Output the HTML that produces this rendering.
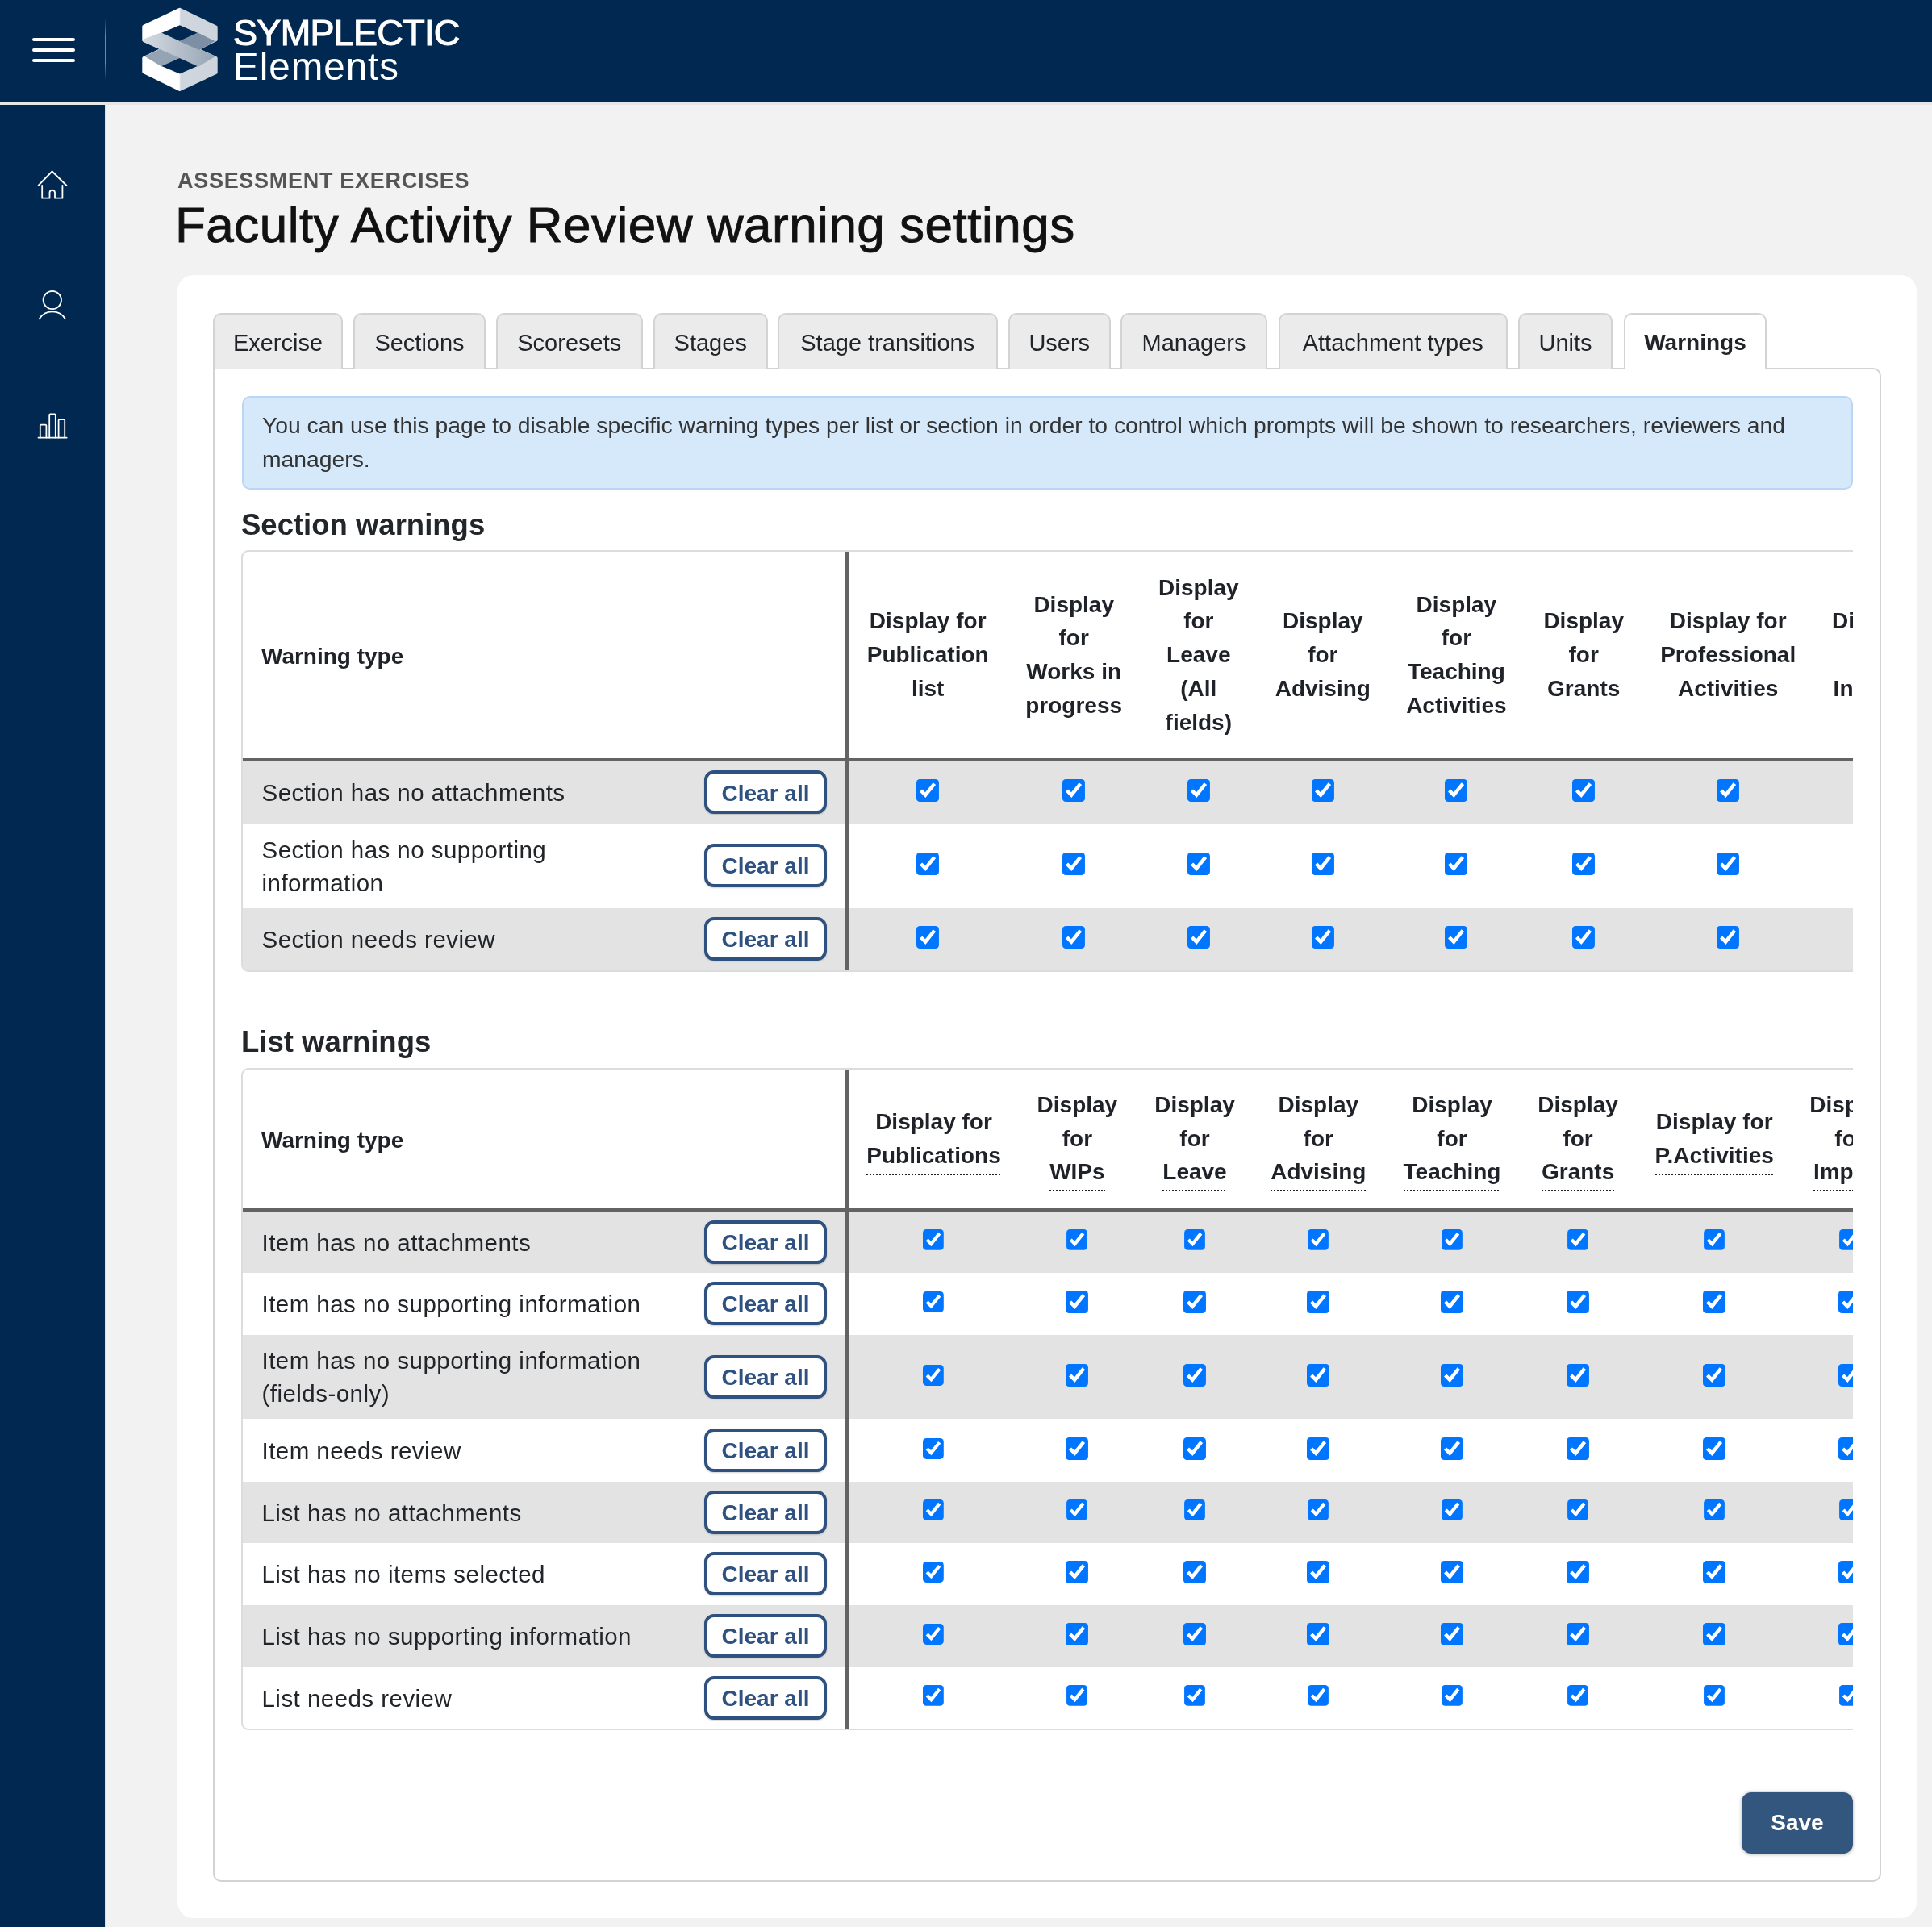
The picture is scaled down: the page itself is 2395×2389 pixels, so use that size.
<!DOCTYPE html><html><head><meta charset="utf-8"><title>Faculty Activity Review warning settings</title><style>
*{margin:0;padding:0;box-sizing:border-box}
html,body{width:2395px;height:2389px;overflow:hidden;background:#f2f2f2;font-family:"Liberation Sans",sans-serif;}
.abs{position:absolute}
#root{position:absolute;left:0;top:0;width:2395px;height:2389px;overflow:hidden;will-change:transform}
#hdr{position:absolute;left:0;top:0;width:2395px;height:127px;background:#012850}
#hline{position:absolute;left:0;top:127px;width:2395px;height:2.5px;background:#e6e6e6}
#side{position:absolute;left:0;top:129.5px;width:130px;height:2260px;background:#012850}
#sline{position:absolute;left:130px;top:129.5px;width:2px;height:2260px;background:#e2e2e2}
.t{position:absolute;white-space:nowrap}
.card{position:absolute;left:220px;top:340.5px;width:2156px;height:2037.5px;background:#fff;border-radius:20px}
.tab{position:absolute;top:388px;height:69px;background:#ebebeb;border:2px solid #d3d3d3;border-bottom:none;border-radius:10px 10px 0 0;font-size:29px;color:#212529;text-align:center;line-height:40px}
.tab span{position:absolute;left:0;right:0;top:14.5px}
.tab.act{background:#fff;font-weight:bold;font-size:28px;z-index:3;height:70px}
.pane{position:absolute;left:264px;top:455.5px;width:2068px;height:1877.5px;border:2px solid #d3d3d3;border-radius:0 10px 10px 10px;background:#fff}
.alert{position:absolute;left:299.5px;top:491px;width:1997px;height:115.5px;background:#d5e9fb;border:2px solid #b9d7f5;border-radius:10px}
.h2{position:absolute;font-weight:bold;font-size:36.5px;color:#22262b;line-height:44px;white-space:nowrap}
.tw{position:absolute;left:299px;width:1998px;overflow:hidden;border-left:2px solid #dcdcdc;border-top:2px solid #dcdcdc;border-bottom:2px solid #dcdcdc;border-radius:9px 0 0 9px}
.row{position:absolute;left:0;width:2200px}
.g{background:#e3e3e3}
.hl{position:absolute;left:0;width:2200px;height:4px;background:#636363}
.vl{position:absolute;left:747px;width:4px;background:#636363}
.lbl{position:absolute;left:23.5px;font-size:29.5px;letter-spacing:0.46px;line-height:41px;color:#212529;white-space:nowrap}
.btn{position:absolute;left:572px;width:152px;height:54px;border:4px solid #2f5180;border-radius:12px;background:#fff;color:#2f5180;font-weight:bold;font-size:28px;text-align:center;line-height:40px;box-shadow:0 1px 2px rgba(0,0,0,.18)}
.btn span{position:absolute;left:0;right:0;top:4.3px}
.hd{position:absolute;font-weight:bold;font-size:28px;line-height:41.7px;color:#1f2329;text-align:center;white-space:nowrap}
.ab{background:linear-gradient(to right,#1f2329 50%,transparent 50%) 0 100%/4px 2px repeat-x;padding-bottom:9px}
.cb{position:absolute;width:27px;height:27px}
.cb input{zoom:2.15;margin:0;display:block}
.save{position:absolute;left:2159px;top:2222px;width:138px;height:76px;background:#33567f;border-radius:12px;color:#fff;font-weight:bold;font-size:28px;text-align:center;box-shadow:0 0.5px 4px rgba(0,0,0,.3)}
.save span{position:absolute;left:0;right:0;top:17.89799999999991px;line-height:40px}
</style></head><body>
<div id="root">
<div id="hdr">
<div class="abs" style="left:40px;top:46.5px;width:53px;height:4.3px;border-radius:2px;background:#fff"></div>
<div class="abs" style="left:40px;top:60px;width:53px;height:4.3px;border-radius:2px;background:#fff"></div>
<div class="abs" style="left:40px;top:72.7px;width:53px;height:4.3px;border-radius:2px;background:#fff"></div>
<div class="abs" style="left:130px;top:22px;width:1.5px;height:78px;background:linear-gradient(to bottom,rgba(255,255,255,0),rgba(255,255,255,.45) 30%,rgba(255,255,255,.45) 70%,rgba(255,255,255,0))"></div>
<svg class="abs" style="left:0;top:0" width="300" height="127" viewBox="0 0 300 127">
<defs>
<linearGradient id="lr" x1="176" x2="270" y1="0" y2="0" gradientUnits="userSpaceOnUse">
<stop offset="0" stop-color="#ffffff"/><stop offset="0.49" stop-color="#ffffff"/><stop offset="0.51" stop-color="#cfd6de"/><stop offset="1" stop-color="#cdd4dc"/></linearGradient>
<linearGradient id="bd" x1="180" x2="266" y1="0" y2="0" gradientUnits="userSpaceOnUse">
<stop offset="0" stop-color="#d3d9e0"/><stop offset="1" stop-color="#96a5b5"/></linearGradient>
</defs>
<polygon fill="url(#lr)" stroke="url(#lr)" stroke-width="4" stroke-linejoin="round" points="178.3,32.9 222.8,11.8 267.7,33.5 267.7,49.2 249,58.6 222.8,69.5 198,58.6 178.3,49.8"/>
<polygon fill="url(#lr)" stroke="url(#lr)" stroke-width="4" stroke-linejoin="round" points="178.3,72 196,63.6 222.8,52 249,63.4 267.7,72 267.7,90 222.8,111 178.3,89.3"/>
<polygon fill="url(#bd)" stroke="url(#bd)" stroke-width="1.4" stroke-linejoin="round" points="176.8,49.6 200.4,40.8 265.5,69.8 245.8,82 180.1,52.2"/>
<polygon fill="#7d8fa5" stroke="#7d8fa5" stroke-width="1" points="222.5,50.7 244.6,40.8 265.5,51 247,61.4"/>
<polygon fill="#95a4b4" stroke="#95a4b4" stroke-width="1" points="180.1,69.8 198,61.4 222,71.8 200.4,82"/>
<polygon fill="#012850" points="200.4,40.8 222.8,31.3 244.6,40.8 222.5,50.7"/>
<polygon fill="#012850" points="200.4,82 222.5,72.1 244.6,82 222.8,91.5"/>
</svg>
<div class="t" style="left:289px;top:15.807499999999997px;font-size:45px;line-height:50px;color:#fff;letter-spacing:-0.7px;-webkit-text-stroke:1.1px #fff">SYMPLECTIC</div>
<div class="t" style="left:289px;top:58.44125000000001px;font-size:47.5px;line-height:50px;color:#fff;letter-spacing:1px">Elements</div>
</div><div id="hline"></div>
<div id="side"></div><div id="sline"></div>
<svg class="abs" style="left:0;top:0" width="130" height="600" viewBox="0 0 130 600" fill="none" stroke="#fff" stroke-width="1.8" stroke-linecap="round" stroke-linejoin="round">
<polyline points="47.5,230 64.6,212.5 82.5,230"/>
<path d="M52.2,230 V245.7 H61.5 V238.5 A3.3,3.3 0 0 1 68,238.5 V245.7 H77.4 V230"/>
<circle cx="64.8" cy="372" r="11.2"/>
<path d="M48.8,395.2 A19,19 0 0 1 80.8,395.2"/>
<path d="M47.5,542.6 H82.7"/>
<path d="M49.8,542.6 V527.5 A1,1 0 0 1 50.8,526.6 H56.4 A1,1 0 0 1 57.4,527.5 V542.6"/>
<path d="M61.2,542.6 V514.4 A1,1 0 0 1 62.2,513.5 H67.8 A1,1 0 0 1 68.8,514.4 V542.6"/>
<path d="M72.6,542.6 V521 A1,1 0 0 1 73.6,520.1 H79.2 A1,1 0 0 1 80.2,521 V542.6"/>
</svg>
<div class="t" style="left:220px;top:208.5445px;font-size:27px;line-height:30px;font-weight:bold;color:#555;letter-spacing:0.71px">ASSESSMENT EXERCISES</div>
<div class="t" style="left:217px;top:243.817px;font-size:62px;line-height:70px;color:#111;letter-spacing:0.5px;-webkit-text-stroke:0.9px #111">Faculty Activity Review warning settings</div>
<div class="card"></div>
<div class="pane"></div>
<div class="tab" style="left:264px;width:161px"><span>Exercise</span></div>
<div class="tab" style="left:438px;width:164px"><span>Sections</span></div>
<div class="tab" style="left:614.5px;width:182.5px"><span>Scoresets</span></div>
<div class="tab" style="left:810px;width:141.5px"><span>Stages</span></div>
<div class="tab" style="left:963.5px;width:273.5px"><span>Stage transitions</span></div>
<div class="tab" style="left:1250px;width:126.5px"><span>Users</span></div>
<div class="tab" style="left:1389px;width:182px"><span>Managers</span></div>
<div class="tab" style="left:1584.5px;width:284.5px"><span>Attachment types</span></div>
<div class="tab" style="left:1882px;width:117px"><span>Units</span></div>
<div class="tab act" style="left:2013px;width:177px"><span>Warnings</span></div>
<div class="alert"></div>
<div class="t" style="left:325px;top:507.19404999999995px;font-size:28.3px;line-height:41.6px;color:#333">You can use this page to disable specific warning types per list or section in order to control which prompts will be shown to researchers, reviewers and<br>managers.</div>
<div class="h2" style="left:299px;top:629.15275px">Section warnings</div>
<div class="tw" style="top:682px;height:522.5px">
<div class="hd" style="left:23px;top:108.64800000000002px;text-align:left">Warning type</div>
<div class="hd" style="left:699.2px;width:300px;top:65.45000000000005px">Display for<br>Publication<br>list</div>
<div class="hd" style="left:880.2px;width:300px;top:44.60000000000002px">Display<br>for<br>Works in<br>progress</div>
<div class="hd" style="left:1034.8px;width:300px;top:23.75px">Display<br>for<br>Leave<br>(All<br>fields)</div>
<div class="hd" style="left:1188.8px;width:300px;top:65.45000000000005px">Display<br>for<br>Advising</div>
<div class="hd" style="left:1354.4px;width:300px;top:44.60000000000002px">Display<br>for<br>Teaching<br>Activities</div>
<div class="hd" style="left:1512.2px;width:300px;top:65.45000000000005px">Display<br>for<br>Grants</div>
<div class="hd" style="left:1691.1999999999998px;width:300px;top:65.45000000000005px">Display for<br>Professional<br>Activities</div>
<div class="hd" style="left:1892.4px;width:300px;top:65.45000000000005px">Display for<br><br>Innovation</div>
<div class="hl" style="top:256px"></div>
<div class="row g" style="top:260px;height:76.5px"></div>
<div class="lbl" style="top:278.25px">Section has no attachments</div>
<div class="btn" style="top:271.25px"><span>Clear all</span></div>
<div class="cb" style="left:835.2px;top:282.25px"><input type="checkbox" checked></div>
<div class="cb" style="left:1016.2px;top:282.25px"><input type="checkbox" checked></div>
<div class="cb" style="left:1170.8px;top:282.25px"><input type="checkbox" checked></div>
<div class="cb" style="left:1324.8px;top:282.25px"><input type="checkbox" checked></div>
<div class="cb" style="left:1490.4px;top:282.25px"><input type="checkbox" checked></div>
<div class="cb" style="left:1648.2px;top:282.25px"><input type="checkbox" checked></div>
<div class="cb" style="left:1827.1999999999998px;top:282.25px"><input type="checkbox" checked></div>
<div class="cb" style="left:2028.4px;top:282.25px"><input type="checkbox" checked></div>
<div class="row" style="top:336.5px;height:105px"></div>
<div class="lbl" style="top:348.5px">Section has no supporting<br>information</div>
<div class="btn" style="top:362.0px"><span>Clear all</span></div>
<div class="cb" style="left:835.2px;top:373.0px"><input type="checkbox" checked></div>
<div class="cb" style="left:1016.2px;top:373.0px"><input type="checkbox" checked></div>
<div class="cb" style="left:1170.8px;top:373.0px"><input type="checkbox" checked></div>
<div class="cb" style="left:1324.8px;top:373.0px"><input type="checkbox" checked></div>
<div class="cb" style="left:1490.4px;top:373.0px"><input type="checkbox" checked></div>
<div class="cb" style="left:1648.2px;top:373.0px"><input type="checkbox" checked></div>
<div class="cb" style="left:1827.1999999999998px;top:373.0px"><input type="checkbox" checked></div>
<div class="cb" style="left:2028.4px;top:373.0px"><input type="checkbox" checked></div>
<div class="row g" style="top:441.5px;height:77px"></div>
<div class="lbl" style="top:460.0px">Section needs review</div>
<div class="btn" style="top:453.0px"><span>Clear all</span></div>
<div class="cb" style="left:835.2px;top:464.0px"><input type="checkbox" checked></div>
<div class="cb" style="left:1016.2px;top:464.0px"><input type="checkbox" checked></div>
<div class="cb" style="left:1170.8px;top:464.0px"><input type="checkbox" checked></div>
<div class="cb" style="left:1324.8px;top:464.0px"><input type="checkbox" checked></div>
<div class="cb" style="left:1490.4px;top:464.0px"><input type="checkbox" checked></div>
<div class="cb" style="left:1648.2px;top:464.0px"><input type="checkbox" checked></div>
<div class="cb" style="left:1827.1999999999998px;top:464.0px"><input type="checkbox" checked></div>
<div class="cb" style="left:2028.4px;top:464.0px"><input type="checkbox" checked></div>
<div class="vl" style="top:0;height:518.5px"></div>
</div>
<div class="h2" style="left:299px;top:1270.05275px">List warnings</div>
<div class="tw" style="top:1323.5px;height:821.0px">
<div class="hd" style="left:23px;top:67.548px;text-align:left">Warning type</div>
<div class="hd" style="left:706.5px;width:300px;top:44.299999999999955px">Display for<br><span class="ab">Publications</span></div>
<div class="hd" style="left:884.4000000000001px;width:300px;top:23.450000000000045px">Display<br>for<br><span class="ab">WIPs</span></div>
<div class="hd" style="left:1030px;width:300px;top:23.450000000000045px">Display<br>for<br><span class="ab">Leave</span></div>
<div class="hd" style="left:1183.3px;width:300px;top:23.450000000000045px">Display<br>for<br><span class="ab">Advising</span></div>
<div class="hd" style="left:1349px;width:300px;top:23.450000000000045px">Display<br>for<br><span class="ab">Teaching</span></div>
<div class="hd" style="left:1505.1px;width:300px;top:23.450000000000045px">Display<br>for<br><span class="ab">Grants</span></div>
<div class="hd" style="left:1674.1999999999998px;width:300px;top:44.299999999999955px">Display for<br><span class="ab">P.Activities</span></div>
<div class="hd" style="left:1842px;width:300px;top:23.450000000000045px">Display<br>for<br><span class="ab">Impact</span></div>
<div class="hl" style="top:172px"></div>
<div class="row g" style="top:176px;height:76px"></div>
<div class="lbl" style="top:194.0px">Item has no attachments</div>
<div class="btn" style="top:187.0px"><span>Clear all</span></div>
<div class="cb" style="left:842.5px;top:198.0px"><input type="checkbox" checked></div>
<div class="cb" style="left:1020.4000000000001px;top:198.0px"><input type="checkbox" checked></div>
<div class="cb" style="left:1166px;top:198.0px"><input type="checkbox" checked></div>
<div class="cb" style="left:1319.3px;top:198.0px"><input type="checkbox" checked></div>
<div class="cb" style="left:1485px;top:198.0px"><input type="checkbox" checked></div>
<div class="cb" style="left:1641.1px;top:198.0px"><input type="checkbox" checked></div>
<div class="cb" style="left:1810.1999999999998px;top:198.0px"><input type="checkbox" checked></div>
<div class="cb" style="left:1978px;top:198.0px"><input type="checkbox" checked></div>
<div class="row" style="top:252px;height:77px"></div>
<div class="lbl" style="top:270.5px">Item has no supporting information</div>
<div class="btn" style="top:263.5px"><span>Clear all</span></div>
<div class="cb" style="left:842.5px;top:274.5px"><input type="checkbox" checked></div>
<div class="cb" style="left:1020.4000000000001px;top:274.5px"><input type="checkbox" checked></div>
<div class="cb" style="left:1166px;top:274.5px"><input type="checkbox" checked></div>
<div class="cb" style="left:1319.3px;top:274.5px"><input type="checkbox" checked></div>
<div class="cb" style="left:1485px;top:274.5px"><input type="checkbox" checked></div>
<div class="cb" style="left:1641.1px;top:274.5px"><input type="checkbox" checked></div>
<div class="cb" style="left:1810.1999999999998px;top:274.5px"><input type="checkbox" checked></div>
<div class="cb" style="left:1978px;top:274.5px"><input type="checkbox" checked></div>
<div class="row g" style="top:329px;height:104.5px"></div>
<div class="lbl" style="top:340.75px">Item has no supporting information<br>(fields-only)</div>
<div class="btn" style="top:354.25px"><span>Clear all</span></div>
<div class="cb" style="left:842.5px;top:365.25px"><input type="checkbox" checked></div>
<div class="cb" style="left:1020.4000000000001px;top:365.25px"><input type="checkbox" checked></div>
<div class="cb" style="left:1166px;top:365.25px"><input type="checkbox" checked></div>
<div class="cb" style="left:1319.3px;top:365.25px"><input type="checkbox" checked></div>
<div class="cb" style="left:1485px;top:365.25px"><input type="checkbox" checked></div>
<div class="cb" style="left:1641.1px;top:365.25px"><input type="checkbox" checked></div>
<div class="cb" style="left:1810.1999999999998px;top:365.25px"><input type="checkbox" checked></div>
<div class="cb" style="left:1978px;top:365.25px"><input type="checkbox" checked></div>
<div class="row" style="top:433.5px;height:77.5px"></div>
<div class="lbl" style="top:452.25px">Item needs review</div>
<div class="btn" style="top:445.25px"><span>Clear all</span></div>
<div class="cb" style="left:842.5px;top:456.25px"><input type="checkbox" checked></div>
<div class="cb" style="left:1020.4000000000001px;top:456.25px"><input type="checkbox" checked></div>
<div class="cb" style="left:1166px;top:456.25px"><input type="checkbox" checked></div>
<div class="cb" style="left:1319.3px;top:456.25px"><input type="checkbox" checked></div>
<div class="cb" style="left:1485px;top:456.25px"><input type="checkbox" checked></div>
<div class="cb" style="left:1641.1px;top:456.25px"><input type="checkbox" checked></div>
<div class="cb" style="left:1810.1999999999998px;top:456.25px"><input type="checkbox" checked></div>
<div class="cb" style="left:1978px;top:456.25px"><input type="checkbox" checked></div>
<div class="row g" style="top:511.0px;height:76px"></div>
<div class="lbl" style="top:529.0px">List has no attachments</div>
<div class="btn" style="top:522.0px"><span>Clear all</span></div>
<div class="cb" style="left:842.5px;top:533.0px"><input type="checkbox" checked></div>
<div class="cb" style="left:1020.4000000000001px;top:533.0px"><input type="checkbox" checked></div>
<div class="cb" style="left:1166px;top:533.0px"><input type="checkbox" checked></div>
<div class="cb" style="left:1319.3px;top:533.0px"><input type="checkbox" checked></div>
<div class="cb" style="left:1485px;top:533.0px"><input type="checkbox" checked></div>
<div class="cb" style="left:1641.1px;top:533.0px"><input type="checkbox" checked></div>
<div class="cb" style="left:1810.1999999999998px;top:533.0px"><input type="checkbox" checked></div>
<div class="cb" style="left:1978px;top:533.0px"><input type="checkbox" checked></div>
<div class="row" style="top:587.0px;height:77px"></div>
<div class="lbl" style="top:605.5px">List has no items selected</div>
<div class="btn" style="top:598.5px"><span>Clear all</span></div>
<div class="cb" style="left:842.5px;top:609.5px"><input type="checkbox" checked></div>
<div class="cb" style="left:1020.4000000000001px;top:609.5px"><input type="checkbox" checked></div>
<div class="cb" style="left:1166px;top:609.5px"><input type="checkbox" checked></div>
<div class="cb" style="left:1319.3px;top:609.5px"><input type="checkbox" checked></div>
<div class="cb" style="left:1485px;top:609.5px"><input type="checkbox" checked></div>
<div class="cb" style="left:1641.1px;top:609.5px"><input type="checkbox" checked></div>
<div class="cb" style="left:1810.1999999999998px;top:609.5px"><input type="checkbox" checked></div>
<div class="cb" style="left:1978px;top:609.5px"><input type="checkbox" checked></div>
<div class="row g" style="top:664.0px;height:77px"></div>
<div class="lbl" style="top:682.5px">List has no supporting information</div>
<div class="btn" style="top:675.5px"><span>Clear all</span></div>
<div class="cb" style="left:842.5px;top:686.5px"><input type="checkbox" checked></div>
<div class="cb" style="left:1020.4000000000001px;top:686.5px"><input type="checkbox" checked></div>
<div class="cb" style="left:1166px;top:686.5px"><input type="checkbox" checked></div>
<div class="cb" style="left:1319.3px;top:686.5px"><input type="checkbox" checked></div>
<div class="cb" style="left:1485px;top:686.5px"><input type="checkbox" checked></div>
<div class="cb" style="left:1641.1px;top:686.5px"><input type="checkbox" checked></div>
<div class="cb" style="left:1810.1999999999998px;top:686.5px"><input type="checkbox" checked></div>
<div class="cb" style="left:1978px;top:686.5px"><input type="checkbox" checked></div>
<div class="row" style="top:741.0px;height:76px"></div>
<div class="lbl" style="top:759.0px">List needs review</div>
<div class="btn" style="top:752.0px"><span>Clear all</span></div>
<div class="cb" style="left:842.5px;top:763.0px"><input type="checkbox" checked></div>
<div class="cb" style="left:1020.4000000000001px;top:763.0px"><input type="checkbox" checked></div>
<div class="cb" style="left:1166px;top:763.0px"><input type="checkbox" checked></div>
<div class="cb" style="left:1319.3px;top:763.0px"><input type="checkbox" checked></div>
<div class="cb" style="left:1485px;top:763.0px"><input type="checkbox" checked></div>
<div class="cb" style="left:1641.1px;top:763.0px"><input type="checkbox" checked></div>
<div class="cb" style="left:1810.1999999999998px;top:763.0px"><input type="checkbox" checked></div>
<div class="cb" style="left:1978px;top:763.0px"><input type="checkbox" checked></div>
<div class="vl" style="top:0;height:817.0px"></div>
</div>
<div class="save"><span>Save</span></div>
</div></body></html>
